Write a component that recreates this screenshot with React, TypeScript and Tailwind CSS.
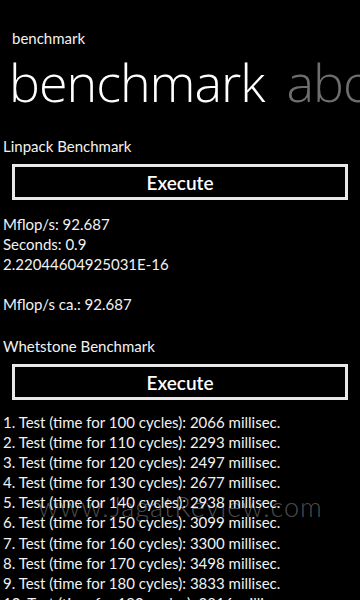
const LINPACK = ['Mflop/s: 92.687', 'Seconds: 0.9', '2.22044604925031E-16'];

const TESTS = [
  [100, 2066],
  [110, 2293],
  [120, 2497],
  [130, 2677],
  [140, 2938],
  [150, 3099],
  [160, 3300],
  [170, 3498],
  [180, 3833],
  [190, 3816],
];

function ExecuteButton() {
  return (
    <div className="px-3 mt-[8px]">
      <button className="w-full h-[36px] border-[3px] border-[#e8e8e8] bg-black text-white text-[19px] font-semibold leading-none flex items-center justify-center">
        Execute
      </button>
    </div>
  );
}

export default function App() {
  return (
    <div
      className="relative w-[360px] h-[600px] overflow-hidden bg-black text-[#f2f2f2]"
      style={{ fontFamily: 'Lato, "Open Sans", sans-serif' }}
    >
      {/* Pivot header */}
      <div className="pl-3 pt-[28px] text-[15px] leading-[20px]">benchmark</div>
      <div
        className="flex gap-[22px] pl-[9px] mt-[4px] whitespace-nowrap text-[52px] leading-[60px] font-light tracking-[-1px]"
        style={{ fontFamily: '"Open Sans", sans-serif' }}
      >
        <span className="text-white">benchmark</span>
        <span className="text-[#6e6e6e]">about</span>
      </div>

      {/* Linpack */}
      <div className="mt-[24px] pl-[3px] text-[15px] leading-[20px]">Linpack Benchmark</div>
      <ExecuteButton />
      <div className="mt-[14px] pl-[3px] text-[15px] leading-[20px]">
        {LINPACK.map((l) => (
          <div key={l}>{l}</div>
        ))}
        <div className="mt-[20px]">Mflop/s ca.: 92.687</div>
      </div>

      {/* Whetstone */}
      <div className="mt-[22px] pl-[3px] text-[15px] leading-[20px]">Whetstone Benchmark</div>
      <ExecuteButton />
      <div className="mt-[12px] pl-[3px] text-[15px] leading-[20.1px]">
        {TESTS.map(([c, ms], i) => (
          <div key={c}>
            {i + 1}. Test (time for {c} cycles): {ms} millisec.
          </div>
        ))}
      </div>

      {/* watermark */}
      <div className="absolute left-[38px] top-[489px] text-[27px] leading-[36px] font-light text-white/30 tracking-[1px]">
        www.JagatReview.com
      </div>
    </div>
  );
}
